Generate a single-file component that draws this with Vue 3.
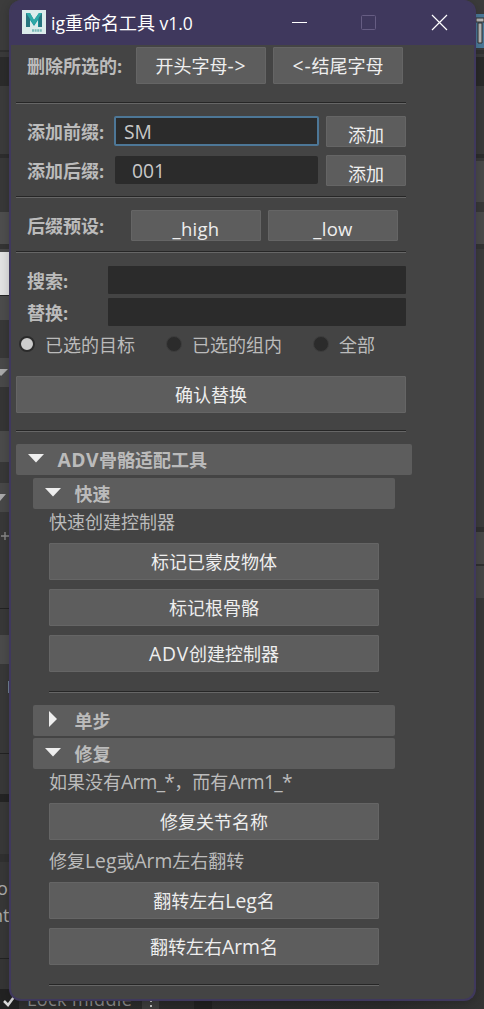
<script setup>
import { ref } from 'vue'

const prefix = ref('SM')
const suffix = ref(' 001')
const search = ref('')
const replacement = ref('')
const scope = ref(0)
const scopes = ['已选的目标', '已选的组内', '全部']

// [height, colour] bands of the host application visible on each side
const leftBands = [
  [50, '#3c3c3c'], [2, '#303030'], [5, '#3a3a3a'], [29, '#2b2b2b'], [68, '#3b3b3b'],
  [4, '#2d2d2d'], [54, '#383838'], [32, '#4e4e4e'], [5, '#343434'], [3, '#484848'],
  [43, '#e2e2e2'], [1, '#252525'], [24, '#4c4c4c'], [38, '#383838'], [29, '#494949'],
  [44, '#353535'], [31, '#4b4b4b'], [21, '#383838'], [29, '#484848'], [96, '#383838'],
  [1, '#222222'], [26, '#383838'], [29, '#4b4b4b'], [89, '#383838'], [1, '#222222'],
  [40, '#383838'], [8, '#242424'], [52, '#383838'], [8, '#303030'], [96, '#373737'],
  [1, '#222222'], [50, '#353535']
]
const rightBands = [
  [14, '#3b3b3b'], [34, '#4a7898'], [2, '#3a3a3a'], [4, '#303030'], [3, '#3a3a3a'],
  [29, '#292929'], [68, '#393939'], [4, '#2c2c2c'], [3, '#383838'], [41, '#494949'],
  [10, '#383838'], [32, '#4a4a4a'], [5, '#333333'], [278, '#3b3b3b'], [5, '#303030'],
  [32, '#484848'], [2, '#303030'], [32, '#464646'], [202, '#373737'], [209, '#343434']
]
</script>

<template>
  <div class="desktop">
    <div class="side">
      <div v-for="(b, i) in leftBands" :key="i" :style="{ height: b[0] + 'px', background: b[1] }"></div>
      <svg class="marks" width="9" height="1009">
        <path d="M-6 369H8L1 376Z M-6 494H6L0 501Z" fill="#aaa" />
        <path d="M1 536H9M5 532V540" stroke="#888" stroke-width="1.4" />
        <path d="M8.5 681V693" stroke="#718095" />
        <text x="-3" y="895">o</text>
        <text x="-8" y="922">nt</text>
      </svg>
    </div>
    <div class="side right">
      <div v-for="(b, i) in rightBands" :key="i" :style="{ height: b[0] + 'px', background: b[1] }"></div>
      <svg class="marks" width="8" height="60">
        <path d="M0 18H8V22H0Z M2 23H6V43H2Z" fill="#b5b5b5" stroke="#303030" />
      </svg>
    </div>
    <div class="bottom">
      <span class="check"><svg width="19" height="20"><path d="M4 12L8 16L14 8" /></svg></span>
      <span class="lock">Lock middle</span>
      <span class="dots"><i></i><i></i><i></i></span>
      <span class="well"></span>
    </div>

    <main class="window">
      <header class="titlebar">
        <svg class="logo" width="24" height="24" viewBox="0 0 24 24">
          <rect width="24" height="24" fill="#dceceb" />
          <path d="M4 3H8L12 10L17 3H20V17H16V10L12 16L8 10V17H4Z" fill="#17939a" />
          <path d="M4 3H8V17H4Z M17 3H20V17H17Z" fill="#27757f" />
          <path d="M4 3L12 15L20 3H17L12 10L8 3Z" fill="#2fa9a7" />
          <path d="M10 20.5H20" stroke="#78b9b8" stroke-width="2.4" stroke-dasharray="2 .6" />
        </svg>
        <h1><span>ig</span>重命名工具<span> v1.0</span></h1>
        <svg class="controls" width="157" height="17" viewBox="0 0 157 17" fill="none">
          <path d="M0 8.5H15" stroke="#fff" />
          <rect x="69.5" y="1.5" width="14" height="14" rx="1" stroke="#665d83" />
          <path d="M140 1L155 16M155 1L140 16" stroke="#fff" stroke-width="1.2" />
        </svg>
      </header>

      <div class="content">
        <section class="row first">
          <label class="caption wide">删除所选的:</label>
          <button class="btn half">开头字母<span class="l arrow">-&gt;</span></button>
          <button class="btn half"><span class="l arrow">&lt;-</span>结尾字母</button>
        </section>
        <hr class="s1" />
        <section class="row add">
          <label class="caption">添加前缀:</label>
          <input v-model="prefix" class="field focused" />
          <button class="btn short">添加</button>
        </section>
        <section class="row add second">
          <label class="caption">添加后缀:</label>
          <input v-model="suffix" class="field" />
          <button class="btn short">添加</button>
        </section>
        <hr class="s2" />
        <section class="row preset">
          <label class="caption">后缀预设:</label>
          <button class="btn half clip">_high</button>
          <button class="btn half clip">_low</button>
        </section>
        <hr class="s3" />
        <section class="row find">
          <label class="caption">搜索:</label>
          <input v-model="search" class="field" />
        </section>
        <section class="row find next">
          <label class="caption">替换:</label>
          <input v-model="replacement" class="field" />
        </section>
        <section class="radios">
          <label v-for="(s, i) in scopes" :key="s" @click="scope = i">
            <span class="radio" :class="{ on: scope === i }"></span>{{ s }}
          </label>
        </section>
        <button class="btn confirm">确认替换</button>
        <hr class="s4" />

        <section class="frame">
          <h2><svg width="16" height="9"><path d="M0 0H16L8 8.5Z" /></svg><span><span class="l adv">ADV</span>骨骼适配工具</span></h2>
          <div class="nested">
            <h2><svg width="16" height="9"><path d="M0 0H16L8 8.5Z" /></svg><span>快速</span></h2>
            <div class="body">
              <p class="p1">快速创建控制器</p>
              <button class="btn">标记已蒙皮物体</button>
              <button class="btn">标记根骨骼</button>
              <button class="btn"><span class="l adv">ADV</span>创建控制器</button>
              <hr class="s5" />
            </div>
            <h2 class="closed"><svg width="8" height="16"><path d="M0 0V16L8 8Z" /></svg><span>单步</span></h2>
            <h2><svg width="16" height="9"><path d="M0 0H16L8 8.5Z" /></svg><span>修复</span></h2>
            <div class="body">
              <p class="p1">如果没有<span class="l tight">Arm_*</span>，而有<span class="l tight">Arm1_*</span></p>
              <button class="btn">修复关节名称</button>
              <p class="p2">修复<span class="l">Leg</span>或<span class="l">Arm</span>左右翻转</p>
              <button class="btn">翻转左右<span class="l">Leg</span>名</button>
              <button class="btn">翻转左右<span class="l">Arm</span>名</button>
              <hr class="s6" />
            </div>
          </div>
        </section>
      </div>
    </main>
  </div>
</template>

<style>
html, body { overflow: hidden; background: #383838; }
</style>

<style scoped>
* { box-sizing: border-box; }
.desktop {
  position: relative;
  display: flex;
  justify-content: space-between;
  width: 484px;
  height: 1009px;
  overflow: hidden;
  background: #353535;
  color: #bbb;
  font: 18px/26px "Open Sans", "Noto Sans CJK SC", sans-serif;
}
.side { position: relative; width: 30px; }
.marks { position: absolute; top: 0; left: 0; }
.right .marks { left: 22px; }
.marks text { fill: #aaa; font-size: 18px; }
.bottom {
  position: absolute;
  left: 0;
  bottom: 0;
  display: flex;
  width: 484px;
  height: 20px;
  background: linear-gradient(90deg, #303030, #292929 35%, #2b2b2b 80%, #343434);
}
.check { width: 19px; background: #222; }
.check path { fill: none; stroke: #ddd; stroke-width: 2.5; }
.lock { width: 123px; padding-left: 8px; line-height: 20px; color: #888; white-space: nowrap; letter-spacing: .4px; }
.dots { display: flex; flex-direction: column; align-items: center; gap: 3px; width: 17px; padding-top: 6px; background: #3c3c3c; }
.dots i { width: 2px; height: 2px; background: #bbb; }
.well { width: 18px; margin-left: 35px; background: #202020; }

.window {
  position: absolute;
  left: 9px;
  top: 0;
  width: 467px;
  height: 1001px;
  overflow: hidden;
  border: 2px solid #3f385d;
  border-top: 0;
  border-radius: 12px;
  background: #444;
  box-shadow: 0 2px 10px rgba(0, 0, 0, .2);
}
.titlebar { display: flex; align-items: center; height: 45px; padding-left: 11px; background: #3f385d; }
.logo { margin-top: -1px; }
h1 { width: 142px; margin: 0 0 0 5px; font-size: 18px; font-weight: 400; color: #fff; white-space: nowrap; }
h1 span { font-size: 17.5px; white-space: pre; }
.controls { margin-left: 99px; }
.content { padding: 2px 0 0 5px; }
.l { font-size: 19.3px; line-height: 1; }
.arrow { letter-spacing: .9px; }
.adv { letter-spacing: .8px; }
h2 .adv { letter-spacing: .5px; }
.tight { letter-spacing: -.75px; }
.row { display: flex; }
.caption { position: relative; top: 1px; width: 98px; padding-left: 11px; font-weight: 700; white-space: nowrap; }
.caption.wide { width: 120px; }
.btn {
  display: block;
  flex: none;
  height: 37px;
  padding: 2px 0 0;
  border: 1px solid #656565;
  border-radius: 1px;
  background: #5d5d5d;
  color: #eee;
  font: inherit;
  line-height: 33px;
  text-align: center;
  white-space: nowrap;
}
.half { width: 130px; }
.half + .half { margin-left: 7px; }
.first { line-height: 37px; }
hr { width: 390px; height: 2px; margin: 0; border: 0; border-top: 1px solid #262626; background: #666; }
.s1 { margin-top: 18px; }
.add { height: 31px; margin-top: 12px; line-height: 31px; }
.add.second { margin-top: 8px; }
.add .caption { top: .5px; }
.field {
  width: 205px;
  height: 30px;
  padding: 1px 12px 0;
  border: 1px solid transparent;
  border-radius: 3px;
  outline: 0;
  background: #2b2b2b;
  background-clip: padding-box;
  color: #c8c8c8;
  font: inherit;
  font-size: 19.3px;
}
.focused { padding: 1px 7px 0 8px; border: 2px solid #4d7797; border-radius: 2px; }
.short { width: 80px; height: 31px; margin-left: 7px; padding: 0; line-height: 36px; overflow: hidden; }
.s2 { margin-top: 10px; }
.preset { height: 31px; margin-top: 12px; line-height: 31px; }
.preset .caption { width: 115px; }
.clip { height: 31px; padding: 0; line-height: 36px; font-size: 18.5px; letter-spacing: .3px; overflow: hidden; }
.s3 { margin-top: 10px; }
.find { height: 28px; margin-top: 13px; line-height: 29px; }
.find.next { margin-top: 4px; }
.find .caption { width: 92px; }
.find .field { width: 298px; height: 28px; border: 0; border-radius: 1px; }
.radios { display: flex; height: 26px; margin-top: 6px; padding-left: 3px; }
.radios label { display: flex; width: 147px; line-height: 26px; white-space: nowrap; }
.radio { width: 16px; height: 16px; margin: 4px 10px 0 0; border: 1px solid #3d3d3d; border-radius: 50%; background: #2b2b2b; }
.radio.on { border: 2px solid #2b2b2b; background: #ccc; }
.confirm { width: 390px; margin-top: 18px; }
.s4 { margin-top: 17px; }
.frame { width: 396px; margin-top: 12px; }
h2 {
  display: flex;
  align-items: flex-start;
  height: 31px;
  margin: 0 0 2px;
  padding-left: 11px;
  border-radius: 2px;
  background: #5d5d5d;
  color: #bbb;
  font-size: 18px;
  line-height: 32px;
}
h2 svg { flex: none; margin: 10px 14px 0 .5px; fill: #eee; }
h2.closed svg { margin: 6px 17.5px 0 5px; }
.nested { padding: 1px 17px 0; }
.body { padding: 0 16px; }
.body .btn { width: 330px; margin-bottom: 9px; }
.body hr { width: 330px; }
p { height: 26px; margin: 0; white-space: nowrap; }
.p1 { margin-bottom: 8px; margin-top: -2px; }
.p2 { margin-bottom: 8px; margin-top: -1px; }
.body .s5 { margin: 19px 0 12px; }
.body .s6 { margin-top: 19px; }
</style>
